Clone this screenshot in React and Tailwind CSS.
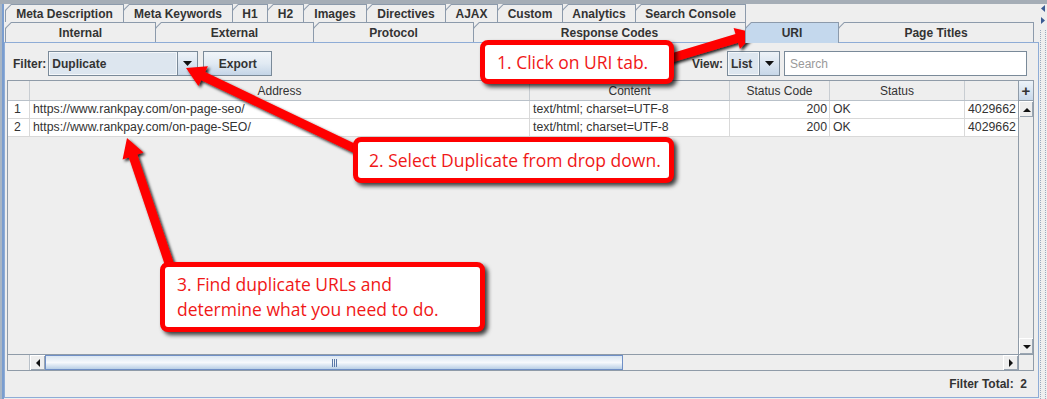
import React from "react";

const topTabs = [
  ["Meta Description", "w-[119px]"],
  ["Meta Keywords", "w-[110px]"],
  ["H1", "w-[36px]"],
  ["H2", "w-[37px]"],
  ["Images", "w-[64px]"],
  ["Directives", "w-[80px]"],
  ["AJAX", "w-[53px]"],
  ["Custom", "w-[66px]"],
  ["Analytics", "w-[74px]"],
  ["Search Console", "w-[111px]"],
];

const bottomTabs = [
  ["Internal", "w-[151px]"],
  ["External", "w-[159px]"],
  ["Protocol", "w-[161px]"],
  ["Response Codes", "w-[273px]"],
  ["URI", "w-[94px]", true],
  ["Page Titles", "w-[196px]"],
];

const rows = [
  ["1", "https://www.rankpay.com/on-page-seo/"],
  ["2", "https://www.rankpay.com/on-page-SEO/"],
];

const Tab = ({ label, w, selected, first }) => (
  <div
    className={`${w} ${first ? "" : "-ml-px"} ${
      selected ? "relative z-10 h-[21px]" : "h-full"
    } shrink-0 bg-[#8c9aab] pt-px px-px [clip-path:polygon(6px_0,100%_0,100%_100%,0_100%,0_6px)]`}
  >
    <div
      className={`h-full flex items-center justify-center font-bold whitespace-nowrap ${
        selected ? "bg-[#c4d8ed]" : "bg-[#eeeeee]"
      } [clip-path:polygon(5.4px_0,100%_0,100%_100%,0_100%,0_5.4px)]`}
    >
      {label}
    </div>
  </div>
);

const Down = ({ w = 9, h = 5 }) => (
  <svg width={w} height={h}>
    <polygon points={`0,0 ${w},0 ${w / 2},${h}`} fill="#111" />
  </svg>
);

const Up = () => (
  <svg width="8" height="4">
    <polygon points="0,4 8,4 4,0" fill="#111" />
  </svg>
);

const Left = () => (
  <svg width="4" height="8">
    <polygon points="4,0 4,8 0,4" fill="#111" />
  </svg>
);

const Right = () => (
  <svg width="4" height="8">
    <polygon points="0,0 0,8 4,4" fill="#111" />
  </svg>
);

function arrow(x1, y1, x2, y2, s = 4.5, hw = 11, hl = 19) {
  const dx = x2 - x1;
  const dy = y2 - y1;
  const len = Math.hypot(dx, dy);
  const ux = dx / len;
  const uy = dy / len;
  const px = -uy;
  const py = ux;
  const bx = x2 - ux * hl;
  const by = y2 - uy * hl;
  const pts = [
    [x1 + px * s, y1 + py * s],
    [bx + px * s, by + py * s],
    [bx + px * hw, by + py * hw],
    [x2, y2],
    [bx - px * hw, by - py * hw],
    [bx - px * s, by - py * s],
    [x1 - px * s, y1 - py * s],
  ];
  return pts.map((p) => p[0].toFixed(1) + "," + p[1].toFixed(1)).join(" ");
}

const Combo = ({ w, label }) => (
  <div className={`${w} h-[25px] flex border border-[#7a8a99] bg-[#dde6ef]`}>
    <div className="flex-1 flex items-center pl-[2px] font-bold border border-[#f4f7fa]">
      {label}
    </div>
    <div className="w-[20px] border-l border-[#7a8a99] flex items-center justify-center bg-gradient-to-b from-[#eef3f8] to-[#c7d7e8]">
      <Down />
    </div>
  </div>
);

const ScrollBtn = ({ children, className = "" }) => (
  <div
    className={`flex items-center justify-center bg-[#eeeeee] border-t border-l border-white shadow-[inset_-1px_-1px_0_#9aa5b1] ${className}`}
  >
    {children}
  </div>
);

export default function App() {
  return (
    <div className="relative w-[1047px] h-[399px] overflow-hidden bg-[#eeeeee] font-['Liberation_Sans',Arial,sans-serif] text-[12px] text-[#333]">
      <div className="flex flex-col h-full">
        <div className="h-[4px] shrink-0 bg-[#a5adb6]" />
        <div className="flex flex-1 min-h-0">
          <div className="w-[4px] shrink-0 bg-[#7a9dcf] border-l-2 border-[#a9b6c5]" />

          <div className="w-[1035px] shrink-0 flex flex-col pb-[1px]">
            <div className="h-[18px] flex pl-[1px] shrink-0">
              {topTabs.map(([label, w], i) => (
                <Tab key={label} label={label} w={w} first={i === 0} />
              ))}
            </div>
            <div className="h-[20px] flex items-start pl-[1px] shrink-0">
              {bottomTabs.map(([label, w, sel], i) => (
                <Tab key={label} label={label} w={w} selected={sel} first={i === 0} />
              ))}
            </div>

            <div className="flex-1 min-h-0 flex flex-col border border-[#8eacd6] pl-[2px] pr-[4px] pt-[8px]">
              <div className="h-[25px] flex items-center pl-[6px] pr-[7px] shrink-0">
                <span className="font-bold">Filter:</span>
                <div className="ml-[2px]">
                  <Combo w="w-[150px]" label="Duplicate" />
                </div>
                <div className="ml-[5px] w-[69px] h-[25px] flex items-center justify-center font-bold border border-[#7a8a99] bg-gradient-to-b from-[#f1f5f9] via-[#e1eaf3] to-[#c4d5e7]">
                  Export
                </div>
                <div className="flex-1" />
                <span className="font-bold">View:</span>
                <div className="ml-[4px]">
                  <Combo w="w-[53px]" label="List" />
                </div>
                <div className="ml-[4px] w-[243px] h-[25px] flex items-center pl-[5px] bg-white border border-[#7a8a99] text-[#9a9a9a]">
                  Search
                </div>
              </div>

              <div className="mt-[4px] h-[291px] shrink-0 flex flex-col border border-[#8f9ba8] bg-[#eeeeee]">
                <div className="flex flex-1 min-h-0">
                  <div className="flex-1 min-w-0 flex flex-col">
                    <div className="h-[20px] flex shrink-0 border-b border-[#b9c1c9] bg-[#eeeeee]">
                      <div className="w-[22px] border-r border-[#c8cdd2]" />
                      <div className="w-[500px] border-r border-[#c8cdd2] flex items-center justify-center">Address</div>
                      <div className="w-[200px] border-r border-[#c8cdd2] flex items-center justify-center">Content</div>
                      <div className="w-[100px] border-r border-[#c8cdd2] flex items-center justify-center">Status Code</div>
                      <div className="w-[135px] border-r border-[#c8cdd2] flex items-center justify-center">Status</div>
                      <div className="flex-1" />
                    </div>
                    {rows.map(([n, url]) => (
                      <div key={n} className="h-[18px] flex shrink-0 bg-white border-b border-[#d9d9d9] text-[12.3px]">
                        <div className="w-[22px] border-r border-[#d9d9d9] flex items-center pl-[6px]">{n}</div>
                        <div className="w-[500px] border-r border-[#d9d9d9] flex items-center pl-[3px]">{url}</div>
                        <div className="w-[200px] border-r border-[#d9d9d9] flex items-center pl-[3px]">text/html; charset=UTF-8</div>
                        <div className="w-[100px] border-r border-[#d9d9d9] flex items-center justify-end pr-[2px]">200</div>
                        <div className="w-[135px] border-r border-[#d9d9d9] flex items-center pl-[3px]">OK</div>
                        <div className="flex-1 whitespace-nowrap flex items-center pl-[3px]">4029662</div>
                      </div>
                    ))}
                    <div className="flex-1" />
                  </div>

                  <div className="w-[15px] shrink-0 flex flex-col border-l border-[#8f9ba8]">
                    <div className="h-[20px] shrink-0 flex items-center justify-center font-bold text-[15px] leading-none border-b border-[#8f9ba8] bg-gradient-to-b from-[#edf3f9] to-[#c9d9ea]">
                      +
                    </div>
                    <ScrollBtn className="h-[16px] shrink-0">
                      <Up />
                    </ScrollBtn>
                    <div className="flex-1 bg-[#eeeeee]" />
                    <ScrollBtn className="h-[16px] shrink-0">
                      <Down w={8} h={4} />
                    </ScrollBtn>
                  </div>
                </div>

                <div className="h-[16px] shrink-0 flex border-t border-[#8f9ba8]">
                  <div className="w-[22px] shrink-0 bg-[#eeeeee] border-r border-[#b9c1c9]" />
                  <ScrollBtn className="w-[15px] shrink-0">
                    <Left />
                  </ScrollBtn>
                  <div className="flex-1 flex bg-[#eeeeee]">
                    <div className="w-[578px] h-full flex items-center justify-center border border-[#6f8fc6] bg-gradient-to-b from-[#dbe6f2] via-[#f6f9fc] to-[#b9cfe6]">
                      <div className="flex gap-[1px] h-[8px]">
                        <div className="w-[1px] bg-[#5a78a8]" />
                        <div className="w-[1px] bg-[#5a78a8]" />
                        <div className="w-[1px] bg-[#5a78a8]" />
                      </div>
                    </div>
                  </div>
                  <ScrollBtn className="w-[15px] shrink-0">
                    <Right />
                  </ScrollBtn>
                  <div className="w-[15px] shrink-0 border-l border-[#8f9ba8] bg-[#eeeeee]" />
                </div>
              </div>

              <div className="flex-1 flex items-center justify-end pr-[7px] font-bold whitespace-pre">
                Filter Total:  2
              </div>
            </div>
          </div>

          <div className="flex-1 flex flex-col bg-[#eeeeee]">
            <svg width="8" height="26" className="shrink-0">
              <polygon points="6,1 6,8 2,4.5" fill="#3b5b93" />
              <polygon points="2,13 2,20 6,16.5" fill="#3b5b93" />
            </svg>
            <div className="flex-1 ml-[1px] w-[6px] border-x border-dotted border-[#9aa9bd]" />
          </div>
        </div>
      </div>

      <svg className="absolute inset-0 pointer-events-none" width="1047" height="399">
        <defs>
          <filter id="sh" x="-20%" y="-20%" width="140%" height="140%">
            <feDropShadow dx="2" dy="2" stdDeviation="1.8" floodColor="#000" floodOpacity="0.85" />
          </filter>
        </defs>
        <polygon points={arrow(668, 59, 755, 33)} fill="#ff0000" filter="url(#sh)" />
        <polygon points={arrow(362, 152, 186, 68)} fill="#ff0000" filter="url(#sh)" />
        <polygon points={arrow(170, 266, 127, 138)} fill="#ff0000" filter="url(#sh)" />
      </svg>

      <div className="absolute left-[480px] top-[40px] w-[194px] h-[44px] flex items-center pl-[12px] rounded-[8px] border-[5px] border-[#ff0000] bg-white shadow-[3px_3px_4px_rgba(0,0,0,0.75)] font-['Open_Sans',sans-serif] text-[17.5px] text-[#f01818] whitespace-nowrap">
        1. Click on URI tab.
      </div>
      <div className="absolute left-[353px] top-[137px] w-[321px] h-[46px] flex items-center pl-[11px] rounded-[8px] border-[5px] border-[#ff0000] bg-white shadow-[3px_3px_4px_rgba(0,0,0,0.75)] font-['Open_Sans',sans-serif] text-[17.5px] text-[#f01818] whitespace-nowrap">
        2. Select Duplicate from drop down.
      </div>
      <div className="absolute left-[160px] top-[262px] w-[325px] h-[70px] flex flex-col justify-center pl-[12px] rounded-[8px] border-[5px] border-[#ff0000] bg-white shadow-[3px_3px_4px_rgba(0,0,0,0.75)] font-['Open_Sans',sans-serif] text-[17.5px] leading-[25px] text-[#f01818] whitespace-nowrap">
        <span>3. Find duplicate URLs and</span>
        <span>determine what you need to do.</span>
      </div>
    </div>
  );
}
